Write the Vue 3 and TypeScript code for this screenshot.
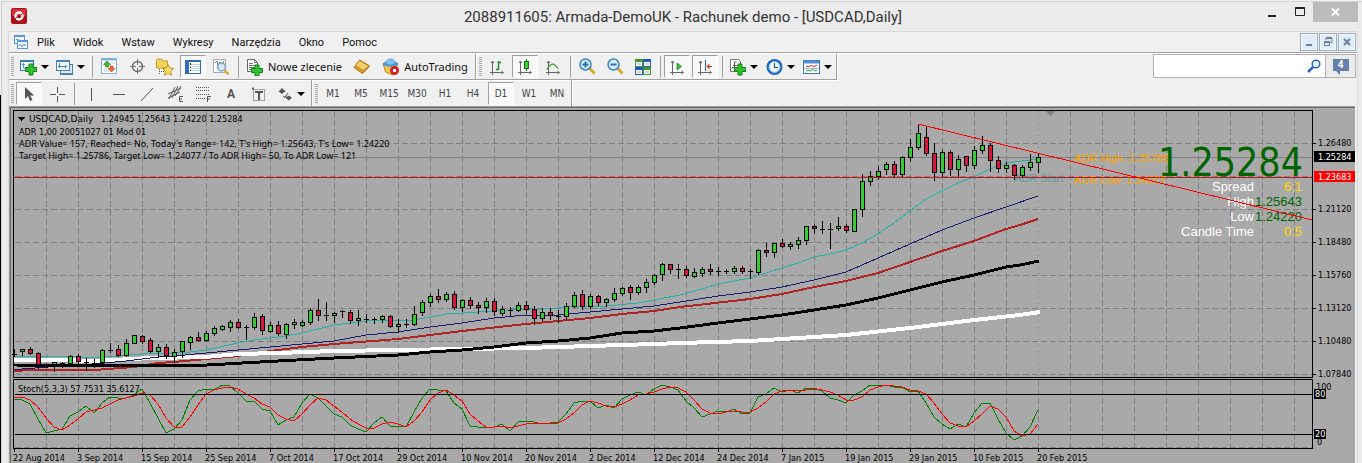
<script setup lang="ts">
type Bar = [number, number, number, number, 'g' | 'r' | 'd']

const menus = ['Plik', 'Widok', 'Wstaw', 'Wykresy', 'Narzędzia', 'Okno', 'Pomoc']
const frames = ['M1', 'M5', 'M15', 'M30', 'H1', 'H4', 'D1', 'W1', 'MN']
const dates = [
  '22 Aug 2014', '3 Sep 2014', '15 Sep 2014', '25 Sep 2014', '7 Oct 2014', '17 Oct 2014',
  '29 Oct 2014', '10 Nov 2014', '20 Nov 2014', '2 Dec 2014', '12 Dec 2014', '24 Dec 2014',
  '7 Jan 2015', '19 Jan 2015', '29 Jan 2015', '10 Feb 2015', '20 Feb 2015',
]
const prices: [string, number][] = [
  ['1.26480', 143], ['1.21120', 209], ['1.18480', 242], ['1.15760', 275],
  ['1.13120', 308], ['1.10480', 341], ['1.07840', 374],
]
const info = [
  "ADR Value= 157, Reached= No, Today's Range= 142, T's High= 1.25643, T's Low= 1.24220",
  'Target High= 1.25786, Target Low= 1.24077 / To ADR High= 50, To ADR Low= 121',
]
const quotes = [
  { label: 'Spread', value: '6:1', color: '#ffd700' },
  { label: 'High', value: '1.25643', color: '#006400' },
  { label: 'Low', value: '1.24220', color: '#006400' },
  { label: 'Candle Time', value: '0:5', color: '#ffd700' },
]
const gridX = Array.from({ length: 40 }, (_, k) => 46 + 32 * k).filter((x) => x < 1312)
const gridY = [143, 176, 209, 242, 275, 308, 341, 374]

// high, body top, body bottom, low, kind
const bars: Bar[] = [
  [349, 354, 354, 356, 'd'], [349, 349, 351, 355, 'g'], [347, 349, 353, 354, 'r'], [352, 353, 364, 368, 'r'],
  [363, 366, 366, 367, 'd'], [362, 362, 364, 371, 'g'], [362, 363, 363, 367, 'd'], [355, 356, 363, 364, 'g'],
  [354, 356, 361, 363, 'r'], [358, 362, 362, 370, 'd'], [359, 363, 363, 367, 'd'], [349, 350, 362, 363, 'g'],
  [343, 350, 350, 352, 'd'], [345, 349, 355, 356, 'r'], [339, 343, 355, 356, 'g'], [335, 335, 343, 343, 'g'],
  [335, 336, 341, 343, 'r'], [338, 340, 351, 352, 'r'], [344, 347, 351, 357, 'g'], [344, 347, 355, 358, 'r'],
  [349, 352, 356, 362, 'g'], [341, 341, 351, 357, 'g'], [336, 337, 342, 349, 'g'], [332, 337, 340, 341, 'r'],
  [331, 333, 340, 341, 'g'], [326, 328, 333, 335, 'g'], [325, 326, 329, 330, 'g'], [320, 322, 327, 331, 'g'],
  [319, 322, 327, 328, 'r'], [325, 327, 327, 339, 'd'], [313, 317, 327, 329, 'g'], [314, 316, 330, 334, 'r'],
  [322, 325, 331, 332, 'g'], [321, 325, 333, 335, 'r'], [323, 324, 334, 338, 'g'], [319, 322, 324, 328, 'g'],
  [320, 322, 325, 326, 'g'], [308, 310, 322, 324, 'g'], [299, 310, 315, 320, 'r'], [302, 315, 315, 320, 'd'],
  [312, 313, 315, 322, 'g'], [310, 311, 311, 317, 'd'], [310, 312, 320, 323, 'r'], [310, 318, 320, 325, 'g'],
  [314, 319, 319, 322, 'd'], [317, 319, 319, 323, 'd'], [315, 316, 319, 322, 'g'], [315, 316, 326, 327, 'r'],
  [319, 324, 326, 332, 'g'], [319, 324, 324, 327, 'd'], [306, 314, 324, 325, 'g'], [300, 302, 312, 315, 'g'],
  [294, 296, 302, 306, 'g'], [289, 296, 299, 302, 'r'], [292, 294, 299, 301, 'g'], [291, 294, 307, 309, 'r'],
  [299, 300, 307, 311, 'g'], [297, 300, 305, 308, 'r'], [302, 305, 307, 313, 'r'], [298, 301, 307, 312, 'g'],
  [298, 301, 311, 315, 'r'], [306, 309, 313, 315, 'g'], [307, 310, 310, 316, 'd'], [302, 305, 310, 311, 'g'],
  [301, 305, 309, 313, 'r'], [306, 309, 318, 324, 'r'], [308, 312, 318, 320, 'g'], [308, 312, 315, 319, 'r'],
  [310, 316, 316, 322, 'd'], [303, 306, 316, 319, 'g'], [292, 295, 306, 307, 'g'], [290, 294, 306, 309, 'r'],
  [294, 296, 306, 308, 'g'], [295, 296, 302, 305, 'r'], [298, 299, 302, 306, 'g'], [288, 293, 299, 301, 'g'],
  [287, 288, 293, 295, 'g'], [285, 287, 292, 299, 'r'], [285, 287, 292, 294, 'g'], [279, 282, 287, 292, 'g'],
  [274, 275, 282, 284, 'g'], [263, 264, 274, 280, 'g'], [264, 264, 269, 273, 'r'], [264, 269, 269, 278, 'd'],
  [266, 269, 275, 277, 'r'], [268, 272, 276, 277, 'g'], [267, 269, 273, 276, 'g'], [264, 269, 271, 274, 'r'],
  [267, 271, 271, 275, 'd'], [269, 271, 271, 273, 'd'], [266, 268, 271, 273, 'g'], [266, 268, 271, 273, 'r'],
  [269, 271, 271, 278, 'd'], [249, 250, 272, 274, 'g'], [243, 250, 252, 256, 'r'], [243, 243, 252, 257, 'g'],
  [239, 243, 246, 247, 'r'], [242, 244, 246, 249, 'g'], [237, 240, 244, 248, 'g'], [226, 226, 240, 244, 'g'],
  [224, 226, 228, 233, 'r'], [221, 229, 229, 233, 'd'], [223, 229, 229, 248, 'd'], [217, 226, 228, 230, 'g'],
  [224, 226, 230, 232, 'r'], [209, 209, 231, 231, 'g'], [174, 181, 209, 216, 'g'], [171, 176, 181, 185, 'g'],
  [166, 171, 176, 179, 'g'], [162, 164, 169, 174, 'g'], [161, 164, 174, 177, 'r'], [156, 157, 174, 176, 'g'],
  [139, 147, 157, 161, 'g'], [124, 133, 147, 149, 'g'], [126, 137, 153, 155, 'r'], [143, 153, 172, 180, 'r'],
  [150, 152, 172, 176, 'g'], [150, 152, 169, 175, 'r'], [155, 159, 169, 177, 'g'], [156, 156, 165, 171, 'r'],
  [146, 150, 165, 168, 'g'], [136, 145, 150, 153, 'g'], [143, 145, 160, 171, 'r'], [156, 160, 168, 172, 'r'],
  [162, 165, 168, 172, 'g'], [164, 165, 175, 179, 'r'], [165, 167, 175, 177, 'g'], [154, 162, 167, 170, 'g'],
  [153, 157, 162, 172, 'g'],
]
const candles = bars.map(([high, top, bottom, low, kind], i) => ({ x: 14 + 8 * i, high, top, bottom, low, kind }))

const averages = [
  { color: '#b22222', width: 2, points: '14,371 30,370 94,370 134,367 158,363 174,362 206,359 238,356 270,351 302,347 334,344 398,339 462,331 526,324 558,321 590,318 622,314 654,311 680,307 750,299 782,294 814,287 846,281 878,273 910,262 942,251 974,241 1006,229 1020,225 1038,219' },
  { color: '#ffffff', width: 4, points: '14,360 62,360 94,361 150,358 206,357 238,354 278,353 334,351 462,349 526,348 590,346 654,344 680,343 750,341 814,337 846,335 910,328 942,324 974,320 1020,315 1040,312' },
  { color: '#191970', width: 1, points: '14,370 22,369 62,366 94,364 126,361 158,357 174,356 206,353 238,350 270,347 334,341 366,335 398,332 430,327 462,323 494,318 526,315 558,315 590,312 622,309 654,306 680,302 718,296 750,292 782,287 814,280 846,272 878,258 910,244 942,230 974,218 1006,207 1038,196' },
  { color: '#000000', width: 3, points: '14,365 187,366 207,365 278,361 334,358 398,355 430,352 462,350 494,347 526,343 558,341 590,338 622,333 654,331 680,328 718,323 750,319 782,315 814,310 846,305 878,298 910,290 942,282 974,275 1006,267 1020,265 1039,261' },
  { color: '#20b2aa', width: 1, points: '14,357 38,356 70,356 94,358 118,356 142,354 174,353 190,352 206,350 238,343 254,340 286,336 302,333 334,325 366,321 382,320 414,320 430,317 446,314 478,312 510,310 542,309 558,308 574,306 606,306 638,303 654,300 680,295 702,289 718,284 750,278 782,268 798,263 814,257 830,254 846,250 862,243 878,234 894,223 910,211 926,199 958,183 974,177 990,169 1006,163 1022,161 1038,159' },
]

// oscillator samples in thirds of a pixel below the pane origin
const toPoints = (values: number[]) => values.map((v, i) => `${14 + 8 * i},${Math.round(280 + v / 3)}`).join(' ')
const stochMain = toPoints([
  357, 360, 372, 418, 458, 454, 446, 409, 395, 377, 399, 370, 352, 355, 355, 345, 327, 370, 415, 460, 447,
  420, 361, 333, 327, 331, 316, 318, 340, 364, 364, 387, 393, 436, 421, 411, 370, 342, 354, 378, 402,
  411, 434, 446, 457, 430, 411, 439, 439, 441, 395, 355, 328, 331, 333, 370, 387, 438, 442, 442, 441, 433,
  454, 425, 424, 427, 433, 430, 425, 403, 368, 364, 364, 385, 376, 385, 356, 346, 337, 346, 328, 316, 320, 330,
  363, 385, 412, 402, 394, 397, 388, 403, 399, 350, 343, 325, 336, 329, 340, 325, 325, 333, 355, 361, 370,
  345, 332, 316, 319, 315, 321, 322, 337, 334, 370, 412, 431, 448, 433, 442, 400, 369, 370, 417, 460, 481,
  468, 442, 390,
])
const stochSignal = toPoints([
  352, 352, 360, 382, 415, 442, 451, 436, 418, 395, 391, 383, 372, 360, 355, 348, 340, 346, 372, 414, 442,
  442, 412, 374, 343, 330, 325, 322, 327, 343, 355, 372, 380, 406, 417, 424, 403, 376, 355, 359, 378,
  397, 417, 432, 445, 444, 433, 427, 431, 440, 424, 397, 361, 338, 331, 346, 363, 401, 424, 442, 442, 439,
  443, 437, 433, 428, 428, 430, 430, 418, 398, 376, 364, 370, 377, 382, 373, 360, 346, 343, 337, 327, 322, 323,
  337, 361, 388, 400, 403, 397, 394, 397, 397, 385, 365, 341, 334, 331, 334, 330, 328, 329, 336, 346, 361,
  359, 350, 330, 321, 316, 318, 320, 329, 332, 343, 369, 403, 430, 439, 442, 424, 403, 379, 386, 412, 452,
  468, 462, 432,
])
</script>

<template>
  <div class="desktop">
    <main class="window">
      <header class="titlebar">
        <svg class="logo" width="16" height="16" viewBox="0 0 16 16">
          <rect width="16" height="16" rx="2" fill="#a8101c" />
          <rect x="1" y="1" width="14" height="7" rx="1" fill="#d8303a" />
          <circle cx="8" cy="8" r="3.5" fill="none" stroke="#fff" stroke-width="2.4" />
          <path d="M4 11l3-3M9 8l3-3" stroke="#c01d28" stroke-width="1" />
        </svg>
        <h1>2088911605: Armada-DemoUK - Rachunek demo - [USDCAD,Daily]</h1>
        <div class="winbuttons">
          <button aria-label="Minimize"><svg width="10" height="10"><path d="M1 9h8" stroke="#222" stroke-width="2" /></svg></button>
          <button aria-label="Maximize"><svg width="10" height="10"><path d="M.5 1v7.500h9V1" fill="none" stroke="#222" stroke-width="1" /><path d="M0 1h10" stroke="#222" stroke-width="2" /></svg></button>
          <button class="close" aria-label="Close"><svg width="9" height="8"><path d="M1 .5l7 7M8 .5l-7 7" stroke="#fff" stroke-width="2" /></svg></button>
        </div>
      </header>

      <div class="client">
        <nav class="menubar">
          <svg class="menu-icon" width="16" height="16" viewBox="0 0 16 16" fill="#f4f9ff" stroke="#5b93dd">
            <rect x="1.500" y="1.500" width="10" height="8" /><path d="M1 2.500h11" /><path d="M3 6l1-1 1 2 1-2" fill="none" />
            <rect x="4.500" y="6.500" width="10" height="8" /><path d="M4 7.500h11" /><path d="M6 12l1.500-2 1.500 3 2-3 1.500 2" fill="none" />
          </svg>
          <button v-for="m in menus" :key="m">{{ m }}</button>
          <div class="mdi">
            <button aria-label="Minimize chart"><svg width="10" height="10"><path d="M2 8h6" stroke="#6f8092" stroke-width="2" /></svg></button>
            <button aria-label="Restore chart"><svg width="10" height="10" fill="none" stroke="#6f8092"><path d="M3 3V1.500h6v4H7.500" /><rect x="1.500" y="4.500" width="5" height="4" /><path d="M3 1h6M1 5h6" stroke-width="2" /></svg></button>
            <button aria-label="Close chart"><svg width="10" height="10"><path d="M2 2l6 6M8 2L2 8" stroke="#6f8092" stroke-width="2" /></svg></button>
          </div>
        </nav>

        <div class="tools">
          <div class="rows">
            <div class="row first">
              <div class="group">
                <i class="grip"></i>
                <button class="drop start" aria-label="New chart">
                  <svg width="17" height="18" viewBox="0 0 17 18"><rect x=".5" y="2.500" width="13" height="10" fill="#eef6ff" stroke="#3b78ad" /><path d="M1 3h12" stroke="#3b78ad" stroke-width="2" /><path d="M3.500 5v5h3M2 6.500h3" fill="none" stroke="#5c8fba" /><path d="M9 6h4v3.500h4v4h-4V17H9v-3.500H5.500v-4H9z" fill="#2fc12f" stroke="#168016" /></svg>
                  <i class="arrow"></i>
                </button>
                <button class="drop start" aria-label="Profiles">
                  <svg width="17" height="18" viewBox="0 0 17 18" fill="#d9ebfa" stroke="#4a82b5"><rect x="4.500" y="6.500" width="12" height="10" /><path d="M4 15.500h13" /><rect x=".5" y="2.500" width="13" height="10" fill="#eef6ff" /><path d="M1 3h13" stroke-width="2" /><path d="M3.500 5v5M2 8.500h9M9.500 7v3" fill="none" /></svg>
                  <i class="arrow"></i>
                </button>
                <i class="sep"></i>
                <button aria-label="Market watch">
                  <svg width="17" height="17" viewBox="0 0 17 17"><rect x=".5" y=".5" width="15" height="15" fill="#fff" stroke="#7fb0dc" /><path d="M1 1.500h14" stroke="#7fb0dc" stroke-width="2" /><path d="M9 5h5M3 11h3M3 13h5" stroke="#ccc" /><path d="M6 3l3.500 3.500h-2V9h-3V6.500h-2z" fill="#35b835" stroke="#1c7c1c" stroke-width=".6" /><path d="M10.500 14L7 10.500h2V8h3v2.500h2z" fill="#ee6a35" stroke="#b03c12" stroke-width=".6" /></svg>
                </button>
                <button aria-label="Data window">
                  <svg width="17" height="17" viewBox="0 0 17 17" fill="none" stroke="#707070"><circle cx="8.500" cy="8.500" r="5" stroke-width="1.500" /><path d="M8.500 1v6M8.500 10v6M1 8.500h6M10 8.500h6" /></svg>
                </button>
                <button aria-label="Navigator">
                  <svg width="18" height="18" viewBox="0 0 18 18"><path d="M.5 10V2.500l1-1.500h4L7 3h4.500v7z" fill="#f2d35e" stroke="#c59a22" /><path d="M3.500 11v6M5 13.500h4" stroke="#555" stroke-dasharray="1 1" /><path d="M12 6.500l1.700 3.600 3.800.5-2.800 2.700.8 4-3.500-2-3.500 2 .8-4-2.800-2.700 3.800-.5z" fill="#ffe36b" stroke="#bf8f1a" /></svg>
                </button>
                <button class="on" aria-label="Terminal">
                  <svg width="16" height="16" viewBox="0 0 16 16"><rect x=".5" y="1.500" width="15" height="13" fill="#fff" stroke="#2b6db8" /><path d="M1 2h14" stroke="#2b6db8" stroke-width="2" /><path d="M2.500 3v11" stroke="#2d6dc0" stroke-width="3" /><path d="M6 5.500h9M6 7.500h9M6 9.500h9M6 11.500h9" stroke="#b9d0e8" /><path d="M5.500 4v2M5.500 8v1M5.500 11v1" stroke="#222" /></svg>
                </button>
                <button aria-label="Strategy tester">
                  <svg width="18" height="18" viewBox="0 0 18 18"><rect x="1.500" y="1.500" width="12" height="13" fill="#fff" stroke="#aaa" /><path d="M3 5l2-2 1 5 2-4 2 3 2-4" fill="none" stroke="#777" /><circle cx="9.500" cy="9" r="4" fill="#d2e9fa" fill-opacity=".9" stroke="#6ea4cc" stroke-width="1.500" /><path d="M12.500 12l4 4.500" stroke="#d8a62e" stroke-width="2.500" /></svg>
                </button>
                <i class="sep"></i>
                <button class="order">
                  <svg width="18" height="18" viewBox="0 0 18 18"><path d="M1.500 1.500h7l3 3v9h-10z" fill="#fff" stroke="#666" /><path d="M8.500 1.500v3h3M3 5.500h4M3 7.500h7M3 9.500h6M3 11.500h3" fill="none" stroke="#777" /><path d="M9 7h4v3.500h3.500v4H13V18H9v-3.500H5.500v-4H9z" fill="#2fc12f" stroke="#168016" /></svg>
                  Nowe zlecenie
                </button>
                <button aria-label="MetaEditor">
                  <svg width="17" height="17" viewBox="0 0 17 17"><path d="M6.500 2L1 9.500l8.500 6L16 9V7.500z" fill="#d99f26" stroke="#a87312" /><path d="M6.500 2.500L16 8l-6 4.500L2.500 7.500z" fill="#f6cf6a" stroke="#b07c18" stroke-width=".7" /></svg>
                </button>
                <button class="auto">
                  <svg width="18" height="18" viewBox="0 0 18 18"><path d="M1.500 7h14l-5 10-7-3z" fill="#f1c84b" stroke="#b98a1c" /><ellipse cx="8.500" cy="6" rx="8" ry="2.800" fill="#4f9fd8" /><path d="M4 5.500c0-6 9-6 9 0-2 2-7 2-9 0z" fill="#7dc1ef" stroke="#3f87bd" stroke-width=".7" /><circle cx="12.500" cy="12.500" r="4.500" fill="#d8201d" /><rect x="11" y="11" width="3" height="3" fill="#fff" /></svg>
                  AutoTrading
                </button>
              </div>
              <div class="group wide">
                <i class="grip"></i>
                <button aria-label="Bar chart"><svg width="16" height="16" viewBox="0 0 16 16" fill="none"><path d="M3.500 2v14M1 13.500h13M2 4l1.500-2L5 4M12.500 12l2 1.500-2 1.500" stroke="#666" /><path d="M9.500 2v9M9.500 3.500H12M7 10.500h2.500" stroke="#1f8b1f" stroke-width="1.500" /></svg></button>
                <button class="on" aria-label="Candlesticks"><svg width="16" height="16" viewBox="0 0 16 16" fill="none"><path d="M3.500 2v14M1 13.500h13M2 4l1.500-2L5 4M12.500 12l2 1.500-2 1.500" stroke="#666" /><path d="M9.500 0v12" stroke="#157a15" /><rect x="7.500" y="2.500" width="4" height="7" fill="#35d135" stroke="#157a15" /></svg></button>
                <button aria-label="Line chart"><svg width="16" height="16" viewBox="0 0 16 16" fill="none"><path d="M3.500 2v14M1 13.500h13M2 4l1.500-2L5 4M12.500 12l2 1.500-2 1.500" stroke="#666" /><path d="M2 10.500c4-7 7-7 11-1" stroke="#2f9b2f" stroke-width="1.300" /></svg></button>
                <i class="sep"></i>
                <button aria-label="Zoom in"><svg width="17" height="17" viewBox="0 0 17 17"><path d="M10.500 10l5 5.500" stroke="#d9a92c" stroke-width="3" /><circle cx="6.500" cy="6.500" r="5.500" fill="#d8edfb" stroke="#3b86c4" stroke-width="1.500" /><path d="M6.500 3.500v6M3.500 6.500h6" stroke="#2b6fae" stroke-width="2" /></svg></button>
                <button aria-label="Zoom out"><svg width="17" height="17" viewBox="0 0 17 17"><path d="M10.500 10l5 5.500" stroke="#d9a92c" stroke-width="3" /><circle cx="6.500" cy="6.500" r="5.500" fill="#d8edfb" stroke="#3b86c4" stroke-width="1.500" /><path d="M3.500 6.500h6" stroke="#2b6fae" stroke-width="2" /></svg></button>
                <button aria-label="Tile windows"><svg width="16" height="16" viewBox="0 0 16 16"><path d="M0 0h8v8H0zM8 8h8v8H8z" fill="#3f9b2c" /><path d="M8 0h8v8H8zM0 8h8v8H0z" fill="#2456c4" /><path d="M1 3h6v4H1zM9 3h6v4H9zM1 11h6v4H1zM9 11h6v4H9z" fill="#fff" /><path d="M2 5h4M10 5h4M2 13h4M10 13h4" stroke="#8ab" /></svg></button>
                <i class="sep"></i>
                <button class="on" aria-label="Auto scroll"><svg width="16" height="16" viewBox="0 0 16 16" fill="none"><path d="M3.500 2v14M1 13.500h13M2 4l1.500-2L5 4M12.500 12l2 1.500-2 1.500" stroke="#666" /><path d="M8 4l4.500 3.500L8 11z" fill="#2fc12f" stroke="#168016" stroke-width=".7" /></svg></button>
                <button class="on" aria-label="Chart shift"><svg width="16" height="16" viewBox="0 0 16 16" fill="none"><path d="M3.500 2v14M1 13.500h13M2 4l1.500-2L5 4M12.500 12l2 1.500-2 1.500" stroke="#666" /><path d="M8.500 1v11" stroke="#2c62a0" /><path d="M15 7.500h-3M12 5.500v4l-2-2z" fill="#c6421c" stroke="#c6421c" /></svg></button>
                <i class="sep"></i>
                <button class="drop" aria-label="Indicators">
                  <svg width="17" height="18" viewBox="0 0 17 18"><path d="M1.500 1.500h8l2 2v10h-10z" fill="#fff" stroke="#777" /><path d="M7.500 4H5.500v8M4 7.500h4M3 9.500h6" fill="none" stroke="#555" /><path d="M9 6h4v3.500h4v4h-4V17H9v-3.500H5.500v-4H9z" fill="#2fc12f" stroke="#168016" /></svg>
                  <i class="arrow"></i>
                </button>
                <button class="drop" aria-label="Periods">
                  <svg width="17" height="18" viewBox="0 0 17 18"><circle cx="8.500" cy="9" r="8" fill="#1b66bd" /><circle cx="8.500" cy="9" r="5.500" fill="#e9f4fd" stroke="#8dc0ea" /><path d="M8.500 5v4.500H12" fill="none" stroke="#345" /></svg>
                  <i class="arrow"></i>
                </button>
                <button class="drop" aria-label="Templates">
                  <svg width="17" height="18" viewBox="0 0 17 18" fill="none"><rect x=".5" y="2.500" width="16" height="13" fill="#fff" stroke="#3b78b8" /><path d="M1 4h15" stroke="#4d8fd0" stroke-width="3" /><path d="M1 10.500h15" stroke="#9bbbd8" /><path d="M3 8.500h3l2-1 3 1 3-1.500" stroke="#b33" /><path d="M3 13l2-1 2 1 3-1.500 2 1.500 2-1" stroke="#2b9b2b" /></svg>
                  <i class="arrow"></i>
                </button>
              </div>
            </div>

            <div class="row second">
              <div class="group tight">
                <i class="grip"></i>
                <button class="on" aria-label="Cursor"><svg width="16" height="16" viewBox="0 0 16 16"><path d="M4 1v12l3-3 2 5 2.500-1-2.300-4.500h4z" fill="#555" /></svg></button>
                <button aria-label="Crosshair"><svg width="16" height="16" viewBox="0 0 16 16"><path d="M8.500 1v6M8.500 10v6M1 8.500h6M10 8.500h6" stroke="#555" /></svg></button>
                <i class="sep"></i>
                <button aria-label="Vertical line"><svg width="16" height="16"><path d="M8.500 2v13" stroke="#555" /></svg></button>
                <button aria-label="Horizontal line"><svg width="16" height="16"><path d="M2 8.500h12" stroke="#555" /></svg></button>
                <button aria-label="Trend line"><svg width="16" height="16"><path d="M2 15L14 2" stroke="#555" /></svg></button>
                <button aria-label="Channel"><svg width="17" height="18" viewBox="0 0 17 18" fill="none" stroke="#555"><path d="M1 9L14 3M1 13L13 7M2 14L8 2M5 13L11 1M8 11L14 1" /><path d="M16 11.500h-3.500v5H16M12.500 14H15" /></svg></button>
                <button aria-label="Fibonacci"><svg width="17" height="18" viewBox="0 0 17 18" fill="none" stroke="#555"><path d="M1 2.500h14M1 5.500h14M1 9.500h14M1 13.500h9" stroke-dasharray="1 1" /><path d="M16 11.500h-3.500V17M12.500 14H15" /></svg></button>
                <button aria-label="Text" class="letter">A</button>
                <button aria-label="Label"><svg width="16" height="16" viewBox="0 0 16 16" fill="none" stroke="#555"><rect x="2.500" y="3.500" width="11" height="11" stroke-dasharray="1 1" /><path d="M1 2.500h2" stroke-width="2" /><path d="M4 6h8M8 6v8" stroke-width="2" /></svg></button>
                <button class="drop" aria-label="Arrows">
                  <svg width="16" height="16" viewBox="0 0 16 16" fill="#555"><path d="M5 2l4 4H7L5 8 1.500 5.500z" /><path d="M6 10l2 1.500L11 7" fill="none" stroke="#555" /><path d="M11.500 14.500l-4-4h3l1.500-1 3 2.500z" /></svg>
                  <i class="arrow"></i>
                </button>
              </div>
              <div class="group frames">
                <i class="grip"></i>
                <button v-for="f in frames" :key="f" :class="{ on: f === 'D1' }">{{ f }}</button>
              </div>
            </div>
          </div>

          <div class="search">
            <input type="text" aria-label="Search" />
            <svg width="15" height="15" viewBox="0 0 15 15" fill="none" stroke="#2f62c9"><circle cx="9" cy="5" r="3.800" fill="#eaf3ff" stroke-width="1.500" /><path d="M6 8l-5 5" stroke-width="2.500" /></svg>
            <button aria-label="Messages"><span>4</span></button>
          </div>
        </div>

        <section class="chart">
          <svg class="plot" viewBox="11 108 1344 355" shape-rendering="crispEdges" role="img" aria-label="USDCAD daily chart">
            <g stroke="#808080" fill="none">
              <g stroke-dasharray="6 3">
                <template v-for="x in gridX" :key="x">
                  <path v-if="x !== 1038" :d="`M${x + 0.5} 111V377`" />
                  <path :d="`M${x + 0.5} 380V448`" />
                </template>
                <path v-for="y in gridY" :key="y" :d="`M15 ${y + 0.5}H1312`" />
                <path d="M15 447.500H1312" />
              </g>
              <path d="M1038.500 111V377" stroke-dasharray="1 5" />
              <path d="M14 157.500H1312" />
            </g>
            <path d="M1045 111h10l-5 5z" fill="#808080" />

            <text x="1014" y="182" class="note" fill="#5f9ea0">ADR Start</text>
            <polyline v-for="a in averages" :key="a.color" :points="a.points" fill="none" :stroke="a.color" :stroke-width="a.width" />

            <g v-for="c in candles" :key="c.x">
              <rect :x="c.x" :y="c.high" width="1" :height="c.low - c.high + 1" />
              <rect v-if="c.kind === 'd'" :x="c.x - 2" :y="c.top" width="5" height="1" />
              <template v-else>
                <rect :x="c.x - 2" :y="c.top" width="5" :height="c.bottom - c.top + 1" />
                <rect :x="c.x - 1" :y="c.top + 1" width="3" :height="c.bottom - c.top - 1" :fill="c.kind === 'g' ? '#32cd32' : '#dc143c'" />
              </template>
            </g>

            <g class="note" fill="#ffa500">
              <text x="1074" y="162">ADR High: 1.25786</text>
              <text x="1074" y="184">ADR Low: 1.24077</text>
            </g>
            <text x="1303" y="176" class="big">1.25284</text>
            <g class="quote">
              <template v-for="(q, i) in quotes" :key="q.label">
                <text x="1254" :y="191 + 15 * i" fill="#fff">{{ q.label }}</text>
                <text x="1302" :y="191 + 15 * i" :fill="q.color">{{ q.value }}</text>
              </template>
            </g>
            <path d="M14 177.500H1312" stroke="#cc1414" />
            <path d="M918 124L1312 220" stroke="#ff0000" />

            <polyline :points="stochMain" fill="none" stroke="#008000" />
            <polyline :points="stochSignal" fill="none" stroke="#ff0000" />

            <g stroke="#000" fill="none">
              <rect x="13.500" y="110.500" width="1299" height="267" />
              <rect x="13.500" y="379.500" width="1299" height="69" />
              <path d="M15 394.500H1312M15 434.500H1312" />
              <path v-for="(d, i) in dates" :key="d" :d="`M${14.5 + 64 * i} 449v3`" />
              <path v-for="p in prices" :key="p[1]" :d="`M1313 ${p[1] + 0.5}h3`" />
            </g>
            <rect x="1314" y="151" width="41" height="11" />
            <rect x="1314" y="171" width="41" height="11" fill="#ff0000" />

            <g class="small">
              <path d="M17 117h8l-4 4z" />
              <text x="101" y="122">1.24945 1.25643 1.24220 1.25284</text>
              <text x="19" y="135">ADR 1,00 20051027 01 Mod 01</text>
              <text x="18" y="392">Stoch(5,3,3) 57.7531 35.6127</text>
              <text v-for="p in prices" :key="p[0]" x="1318" :y="p[1] + 3">{{ p[0] }}</text>
              <text v-for="(d, i) in dates" :key="d" :x="13 + 64 * i" y="461">{{ d }}</text>
              <text x="1316" y="390">100</text>
              <text x="1317" y="445">0</text>
              <rect x="1314" y="389" width="12" height="10" />
              <rect x="1314" y="429" width="12" height="10" />
              <g fill="#fff">
                <text x="1318" y="160">1.25284</text>
                <text x="1318" y="180">1.23683</text>
                <text x="1315" y="397">80</text>
                <text x="1315" y="437">20</text>
              </g>
            </g>
            <text x="29" y="122" class="symbol">USDCAD,Daily</text>
            <g class="info">
              <text v-for="(line, i) in info" :key="line" x="19" :y="147 + 12 * i">{{ line }}</text>
            </g>
          </svg>
        </section>
      </div>
    </main>
  </div>
</template>

<style>
body {
  background: #ebebeb;
  overflow: hidden;
}
</style>

<style scoped>
* {
  box-sizing: border-box;
}
.desktop {
  padding: 1px 0 0 1px;
  background: linear-gradient(#f0f0f0 95px, #000 95px);
}
.window {
  padding: 0 4px 0 6px;
  border-top: 1px solid #d2d2d2;
  border-left: 1px solid #d2d2d2;
  background: #ebebeb;
}
button {
  display: flex;
  align-items: center;
  justify-content: center;
  margin: 0;
  padding: 0;
  border: 0;
  background: none;
  color: #111;
  font: inherit;
}
svg {
  display: block;
  flex: none;
}
.titlebar {
  display: grid;
  grid-template-columns: 92px 1fr 92px;
  height: 29px;
}
.logo {
  margin: 6px 0 0 3px;
}
h1 {
  margin: 0;
  color: #333;
  font: 15px/31px Roboto, "Open Sans", sans-serif;
  text-align: center;
  white-space: nowrap;
}
.winbuttons {
  display: flex;
  justify-content: flex-end;
}
.winbuttons button {
  flex: none;
  width: 28px;
  height: 20px;
}
.winbuttons .close {
  width: 45px;
  margin-left: -1px;
  background: #bcbcbc;
}
.client {
  border: 1px solid #d9d9d9;
  border-bottom: 0;
  background: #f0f0f0;
}
.menubar {
  display: flex;
  align-items: center;
  gap: 18px;
  height: 21px;
  padding-left: 4px;
  border-bottom: 1px solid #a0a0a0;
  font: 11px Roboto, "Noto Sans", sans-serif;
}
.menu-icon {
  margin-right: -10px;
}
.mdi {
  display: flex;
  gap: 1px;
  margin: 0 1px 0 auto;
}
.mdi button {
  width: 18px;
  height: 18px;
  border: 1px solid #9aabbd;
  background: #dfedf9;
  box-shadow: inset 0 0 0 1px #f4f9fd;
}
.tools {
  display: flex;
  justify-content: space-between;
  padding-right: 1px;
  border-top: 1px solid #fff;
}
.row {
  display: flex;
  height: 26px;
  font: 11px "Noto Sans", "Open Sans", sans-serif;
}
.group {
  display: flex;
  align-items: center;
  border-right: 1px solid #a0a0a0;
  box-shadow: 1px 0 #fff;
}
.first .group {
  border-bottom: 1px solid #a0a0a0;
  box-shadow: 1px 1px #fff;
}
.second .group {
  padding-top: 1px;
}
.grip {
  width: 3px;
  height: 19px;
  margin: 0 3px 0 2px;
  background: repeating-linear-gradient(#aaa 0 1px, #f0f0f0 1px 2px);
}
.group button {
  flex: none;
  width: 28px;
  height: 23px;
}
.group .on {
  width: 26px;
  margin: 0 1px;
  border: 1px solid;
  border-color: #a0a0a0 #fff #fff #a0a0a0;
  background: #f8f8f8;
}
.sep {
  width: 6px;
  height: 22px;
  background: linear-gradient(#a0a0a0, #a0a0a0) center / 1px 100% no-repeat;
}
.group .drop {
  gap: 4px;
  width: 36px;
}
.group .start {
  justify-content: flex-start;
  padding-left: 3px;
}
.wide .drop {
  width: 37px;
}
.arrow {
  width: 0;
  border: 4px solid transparent;
  border-top-color: #000;
  border-bottom: 0;
}
.group .order {
  gap: 4px;
  width: 106px;
}
.group .auto {
  gap: 4px;
  width: 100px;
}
.wide .grip,
.frames .grip {
  margin: 0 1px 0 3px;
}
.tight .grip {
  margin-right: 1px;
}
.group .letter {
  color: #555;
  font: bold 12px Roboto, sans-serif;
}
.tight {
  padding-right: 2px;
}
.frames button {
  color: #444;
  font: 10px "DejaVu Sans Condensed", "DejaVu Sans", sans-serif;
}
.search {
  display: flex;
  width: 203px;
  height: 24px;
  border: 1px solid #b0b0b0;
  background: #fff;
}
.search input {
  flex: 1;
  min-width: 0;
  border: 0;
  outline: 0;
  background: none;
}
.search svg {
  margin: 4px 3px 0 0;
}
.search button {
  width: 30px;
  height: 22px;
  border-left: 1px solid #b0b0b0;
  background: #ebebeb;
}
.search span {
  position: relative;
  width: 16px;
  height: 12px;
  margin-bottom: 2px;
  background: #647fae;
  color: #fff;
  font: bold 10px/12px Roboto, sans-serif;
}
.search span::after {
  content: "";
  position: absolute;
  top: 12px;
  left: 3px;
  border-top: 4px solid #647fae;
  border-left: 4px solid transparent;
}
.chart {
  margin-right: 2px;
  border-top: 1px solid #a0a0a0;
  border-left: 1px solid #a0a0a0;
  background: #a9a9a9;
}
.plot {
  width: 100%;
  border-top: 1px solid #696969;
  border-left: 1px solid #696969;
}
.small {
  font: 9px "DejaVu Sans Condensed", "DejaVu Sans", sans-serif;
}
.symbol {
  font: 9px "DejaVu Sans", sans-serif;
}
.info {
  font: 9px "Noto Sans", "Open Sans", sans-serif;
}
.note {
  font: 11px "Liberation Sans", Arial, sans-serif;
}
.big {
  fill: #006400;
  font: 39px "DejaVu Sans Condensed", "DejaVu Sans", sans-serif;
  text-anchor: end;
}
.quote {
  font: 13px "Liberation Sans", Arial, sans-serif;
  text-anchor: end;
}
</style>
